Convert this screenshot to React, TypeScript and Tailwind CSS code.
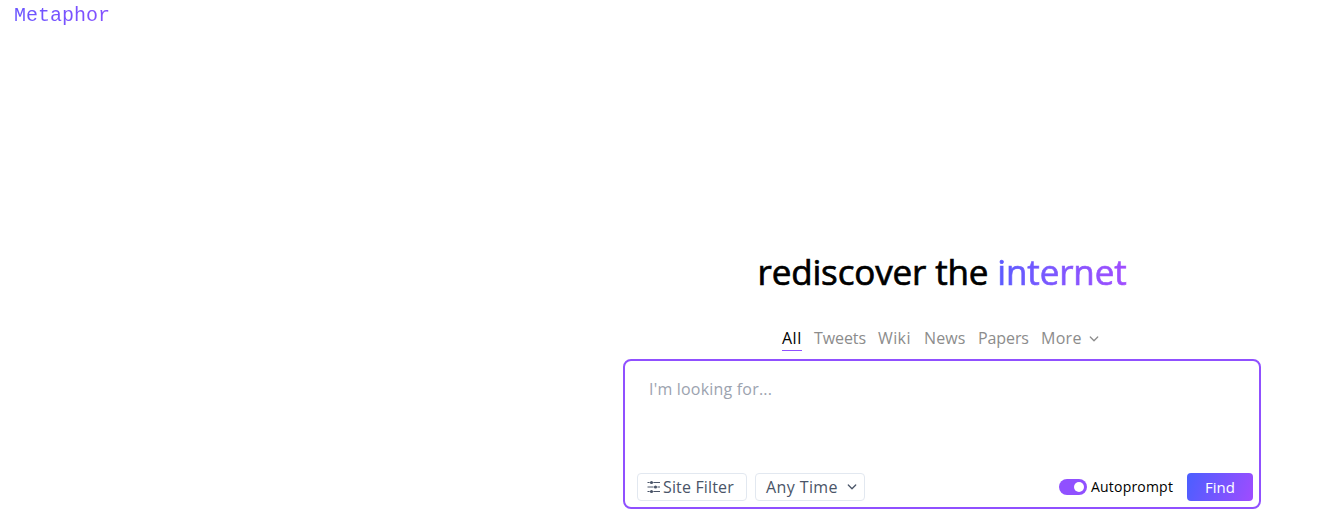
import { useState } from 'react';
import clsx from 'clsx';

const tabs = [
  { name: 'All', width: 'w-5 tracking-[0.5px]' },
  { name: 'Tweets', width: 'w-[52px] tracking-[-0.1px]' },
  { name: 'Wiki', width: 'w-[34px] tracking-[0.4px]' },
  { name: 'News', width: 'w-[42px] tracking-[0.1px]' },
  { name: 'Papers', width: 'w-[51px] tracking-[-0.1px]' },
];

function ChevronIcon({ className }: { className?: string }) {
  return (
    <svg
      viewBox="0 0 10 6"
      fill="none"
      stroke="currentColor"
      strokeWidth="1.3"
      strokeLinecap="round"
      strokeLinejoin="round"
      className={clsx('w-2.5 h-1.5 shrink-0', className)}
    >
      <path d="M1.3 1 5 4.7 8.7 1" />
    </svg>
  );
}

function FilterIcon() {
  return (
    <svg viewBox="0 0 14 14" fill="currentColor" className="w-3.5 h-3.5 shrink-0">
      <path
        d="M0.5 2.5H2.6M6.4 2.5H13M0.5 7H6.6M10.4 7H13M0.5 11.5H2.6M6.4 11.5H13"
        stroke="currentColor"
        strokeWidth="1"
      />
      <circle cx="4.5" cy="2.5" r="1.6" />
      <circle cx="8.5" cy="7" r="1.6" />
      <circle cx="4.5" cy="11.5" r="1.6" />
    </svg>
  );
}

export default function App() {
  const [activeTab, setActiveTab] = useState('All');
  const [query, setQuery] = useState('');
  const [autoprompt, setAutoprompt] = useState(true);

  return (
    <div className="h-[517px] overflow-hidden bg-white text-black font-['Open_Sans','Noto_Sans',sans-serif]">
      <header className="h-7 pl-3.5">
        <span className="inline-block bg-linear-to-r from-[#6a55ff] to-[#8350ff] bg-clip-text text-transparent text-xl leading-8 font-['Liberation_Mono',monospace]">
          Metaphor
        </span>
      </header>

      <main className="ml-[623px] w-[638px] pt-[219px] flex flex-col items-center">
        <h1 className="h-[50px] whitespace-nowrap text-[35px] leading-[50px] font-medium tracking-[-0.14px] [-webkit-text-stroke:0.7px]">
          rediscover the{' '}
          <span className="bg-linear-to-r from-[#5b5cff] to-[#a04cff] bg-clip-text text-transparent">
            internet
          </span>
        </h1>

        {/* Search categories */}
        <nav className="mt-[30px] mb-2 w-80 h-6 flex gap-3 text-base leading-[23px] text-[#8c8c8c]">
          {tabs.map((tab) => (
            <button
              key={tab.name}
              onClick={() => setActiveTab(tab.name)}
              className={clsx(
                'h-6 whitespace-nowrap text-left border-b cursor-pointer',
                tab.width,
                activeTab === tab.name ? 'border-[#9050ff] text-black' : 'border-transparent'
              )}
            >
              {tab.name}
            </button>
          ))}
          <button className="h-[23px] flex items-center gap-1.5 cursor-pointer">
            <span className="w-[42px] text-left leading-[23px] tracking-[0.3px]">More</span>
            <ChevronIcon />
          </button>
        </nav>

        {/* Search box */}
        <div className="w-full h-[150px] flex flex-col justify-between rounded-lg border-2 border-[#9050ff] pt-4 pb-1.5 pl-3 pr-1.5">
          <textarea
            value={query}
            onChange={(e) => setQuery(e.target.value)}
            placeholder="I'm looking for..."
            className="h-16 px-3 resize-none outline-none text-base tracking-[0.2px] placeholder:text-[#9ca3af]"
          />

          <div className="flex items-center justify-between">
            <div className="flex gap-2 text-base tracking-[0.15px] text-[#4a5568]">
              <button className="w-[110px] h-7 flex items-center gap-0.5 pl-[9px] rounded border border-[#e2e8f0] whitespace-nowrap cursor-pointer">
                <FilterIcon />
                Site Filter
              </button>
              <button className="w-[110px] h-7 flex items-center justify-between pl-2.5 pr-[7px] rounded border border-[#e2e8f0] tracking-[0.4px] whitespace-nowrap cursor-pointer">
                Any Time
                <ChevronIcon />
              </button>
            </div>

            <div className="flex items-center">
              <button
                role="switch"
                aria-checked={autoprompt}
                aria-label="Autoprompt"
                onClick={() => setAutoprompt(!autoprompt)}
                className={clsx(
                  'w-7 h-4 flex items-center rounded-full px-[3px] cursor-pointer',
                  autoprompt ? 'justify-end bg-[#9050ff]' : 'justify-start bg-gray-300'
                )}
              >
                <span className="w-2.5 h-2.5 rounded-full bg-white" />
              </button>
              <span className="w-[82px] ml-1 mr-3.5 whitespace-nowrap text-sm tracking-[0.2px]">
                Autoprompt
              </span>
              <button className="w-[66px] h-7 rounded bg-linear-[110deg] from-[#4a5fff] to-[#a04cff] text-[15px] text-white cursor-pointer">
                Find
              </button>
            </div>
          </div>
        </div>
      </main>
    </div>
  );
}
